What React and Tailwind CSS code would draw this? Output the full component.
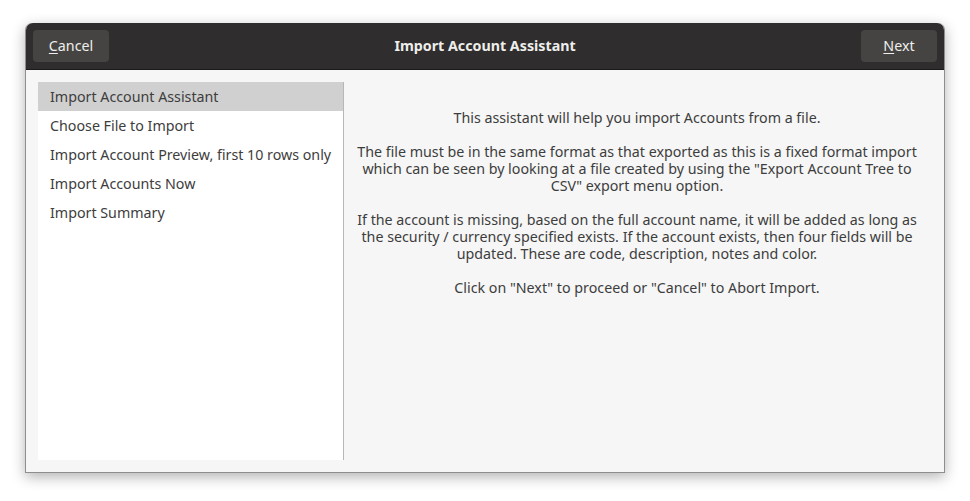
import React from 'react';

const steps = [
  'Import Account Assistant',
  'Choose File to Import',
  'Import Account Preview, first 10 rows only',
  'Import Accounts Now',
  'Import Summary',
];

const message = [
  'This assistant will help you import Accounts from a file.',
  '',
  'The file must be in the same format as that exported as this is a fixed format import',
  'which can be seen by looking at a file created by using the "Export Account Tree to',
  'CSV" export menu option.',
  '',
  'If the account is missing, based on the full account name, it will be added as long as',
  'the security / currency specified exists. If the account exists, then four fields will be',
  'updated. These are code, description, notes and color.',
  '',
  'Click on "Next" to proceed or "Cancel" to Abort Import.',
].join('\n');

export default function App() {
  return (
    <div
      className="w-[970px] h-[501px] bg-white pt-[23px] pl-[25px]"
      style={{ fontFamily: '"Noto Sans", "Open Sans", sans-serif' }}
    >
      <div className="w-[920px] h-[450px] flex flex-col rounded-t-[7px] border border-t-0 border-[#8e8e8e] bg-[#f6f6f6] shadow-[0_4px_14px_rgba(0,0,0,0.3)]">
        {/* header bar */}
        <div className="h-[47px] shrink-0 flex items-center justify-between px-[7px] bg-[#2f2d2d] rounded-t-[7px] border-b border-[#1c1b1b]">
          <button className="w-[76px] h-[32px] rounded-[4px] bg-[#464442] text-[#eeeeec] text-[14.25px]">
            <span className="underline underline-offset-2">C</span>ancel
          </button>
          <div className="text-[#eeeeec] text-[14.25px] font-bold">Import Account Assistant</div>
          <button className="w-[76px] h-[32px] rounded-[4px] bg-[#464442] text-[#eeeeec] text-[14.25px]">
            <span className="underline underline-offset-2">N</span>ext
          </button>
        </div>

        {/* body */}
        <div className="flex-1 flex min-h-0">
          <div className="w-[306px] ml-[12px] mt-[12px] mb-[12px] bg-white border-r border-[#b7b7b7]">
            {steps.map((s, i) => (
              <div
                key={s}
                className={`h-[29px] flex items-center pl-[12px] text-[14.25px] text-[#3d3d3d] ${i === 0 ? 'bg-[#d0d0d0]' : ''}`}
              >
                {s}
              </div>
            ))}
          </div>
          <div className="flex-1 pr-[14px] pt-[39px]">
            <p className="text-center text-[14.25px] leading-[17px] text-[#3d3d3d] whitespace-pre-line">
              {message}
            </p>
          </div>
        </div>
      </div>
    </div>
  );
}
